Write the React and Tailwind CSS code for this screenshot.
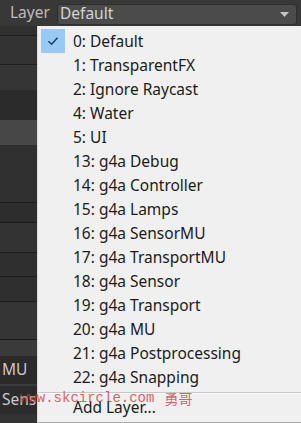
const layers = [
  "0: Default",
  "1: TransparentFX",
  "2: Ignore Raycast",
  "4: Water",
  "5: UI",
  "13: g4a Debug",
  "14: g4a Controller",
  "15: g4a Lamps",
  "16: g4a SensorMU",
  "17: g4a TransportMU",
  "18: g4a Sensor",
  "19: g4a Transport",
  "20: g4a MU",
  "21: g4a Postprocessing",
  "22: g4a Snapping",
];

// left inspector strips peeking out from under the popup
const strips = [
  ["h-[9px]", "bg-[#303030]"],
  ["h-px", "bg-[#1e1e1e]"],
  ["h-[28px]", "bg-[#333333]"],
  ["h-px", "bg-[#1e1e1e]"],
  ["h-[25px]", "bg-[#353535]"],
  ["h-[30px]", "bg-[#2b2b2b]"],
  ["h-[25px]", "bg-[#474747]"],
  ["h-[57px]", "bg-[#303030]"],
  ["h-px", "bg-[#1c1c1c]"],
  ["h-[19px]", "bg-[#2d2d2d]"],
  ["h-px", "bg-[#1c1c1c]"],
  ["h-[29px]", "bg-[#333333]"],
  ["h-px", "bg-[#1c1c1c]"],
  ["h-[23px]", "bg-[#2f2f2f]"],
  ["h-px", "bg-[#1c1c1c]"],
  ["h-[24px]", "bg-[#2f2f2f]"],
  ["h-px", "bg-[#1c1c1c]"],
  ["h-[37px]", "bg-[#353535]"],
  ["h-px", "bg-[#1c1c1c]"],
  ["h-[16px]", "bg-[#3a3a3a]"],
];

function Check() {
  return (
    <svg width="12" height="10" viewBox="0 0 12 10" fill="none">
      <path d="M1.5 5.2 L4.6 8.2 L10.5 1.8" stroke="#1f3f66" strokeWidth="1.6" />
    </svg>
  );
}

export default function App() {
  return (
    <div
      className="relative w-[301px] h-[423px] overflow-hidden bg-[#383838] flex flex-col"
      style={{ fontFamily: '"Noto Sans", "Open Sans", sans-serif' }}
    >
      <div className="h-[26px] flex items-center pl-[10px] pr-[4px] shrink-0">
        <span className="text-[15.5px] text-[#bdbdbd] w-[47px]">Layer</span>
        <div className="flex-1 h-[21px] mt-[2px] bg-[#4b4b4b] rounded-[3px] border border-[#2e2e2e] flex items-center justify-between pl-[2px] pr-[7px]">
          <span className="text-[15.5px] text-[#d4d4d4] leading-none">Default</span>
          <svg width="9" height="5" viewBox="0 0 9 5">
            <path d="M0 0 H9 L4.5 5 Z" fill="#c4c4c4" />
          </svg>
        </div>
      </div>

      <div className="flex flex-1">
        <div className="w-[37px] flex flex-col shrink-0">
          {strips.map(([h, bg], i) => (
            <div key={i} className={`${h} ${bg}`} />
          ))}
          <div className="h-[28px] bg-[#2a2a2a] flex items-center pl-[2px] text-[15.5px] text-[#c8c8c8]">
            MU
          </div>
          <div className="h-[2px] bg-[#3a3a3a]" />
          <div className="h-[28px] bg-[#2b2b2b] flex items-center pl-[2px] text-[15.5px] text-[#c8c8c8]">
            Sens
          </div>
          <div className="flex-1 bg-[#333333]" />
        </div>

        <div className="flex-1 bg-[#f0f0f0] border-l border-[#dcdcdc] border-b border-b-[#a8a8a8] pt-[3px] flex flex-col">
          {layers.map((name, i) => (
            <div key={name} className="h-[24px] flex items-center pl-[3px]">
              <div
                className={`w-[24px] h-[24px] flex items-center justify-center ${
                  i === 0 ? "bg-[#99c9f5]" : ""
                }`}
              >
                {i === 0 && <Check />}
              </div>
              <span className="ml-[8px] mt-[2px] text-[15.5px] text-[#1b1b1b] leading-none">
                {name}
              </span>
            </div>
          ))}
          <div className="mt-[3px] h-px bg-[#c8c8c8]" />
          <div className="h-px bg-[#fbfbfb]" />
          <div className="h-[26px] flex items-center pl-[35px] pt-[2px] text-[15.5px] text-[#1b1b1b]">
            Add Layer...
          </div>
        </div>
      </div>

      <div
        className="absolute left-[20px] top-[388px] flex items-center text-[14px] text-[#d03a3a]/80"
        style={{ fontFamily: '"Liberation Mono", monospace' }}
      >
        <span>www.skcircle.com</span>
        <span className="ml-[10px]" style={{ fontFamily: '"Noto Sans CJK SC", sans-serif' }}>
          勇哥
        </span>
      </div>
    </div>
  );
}
